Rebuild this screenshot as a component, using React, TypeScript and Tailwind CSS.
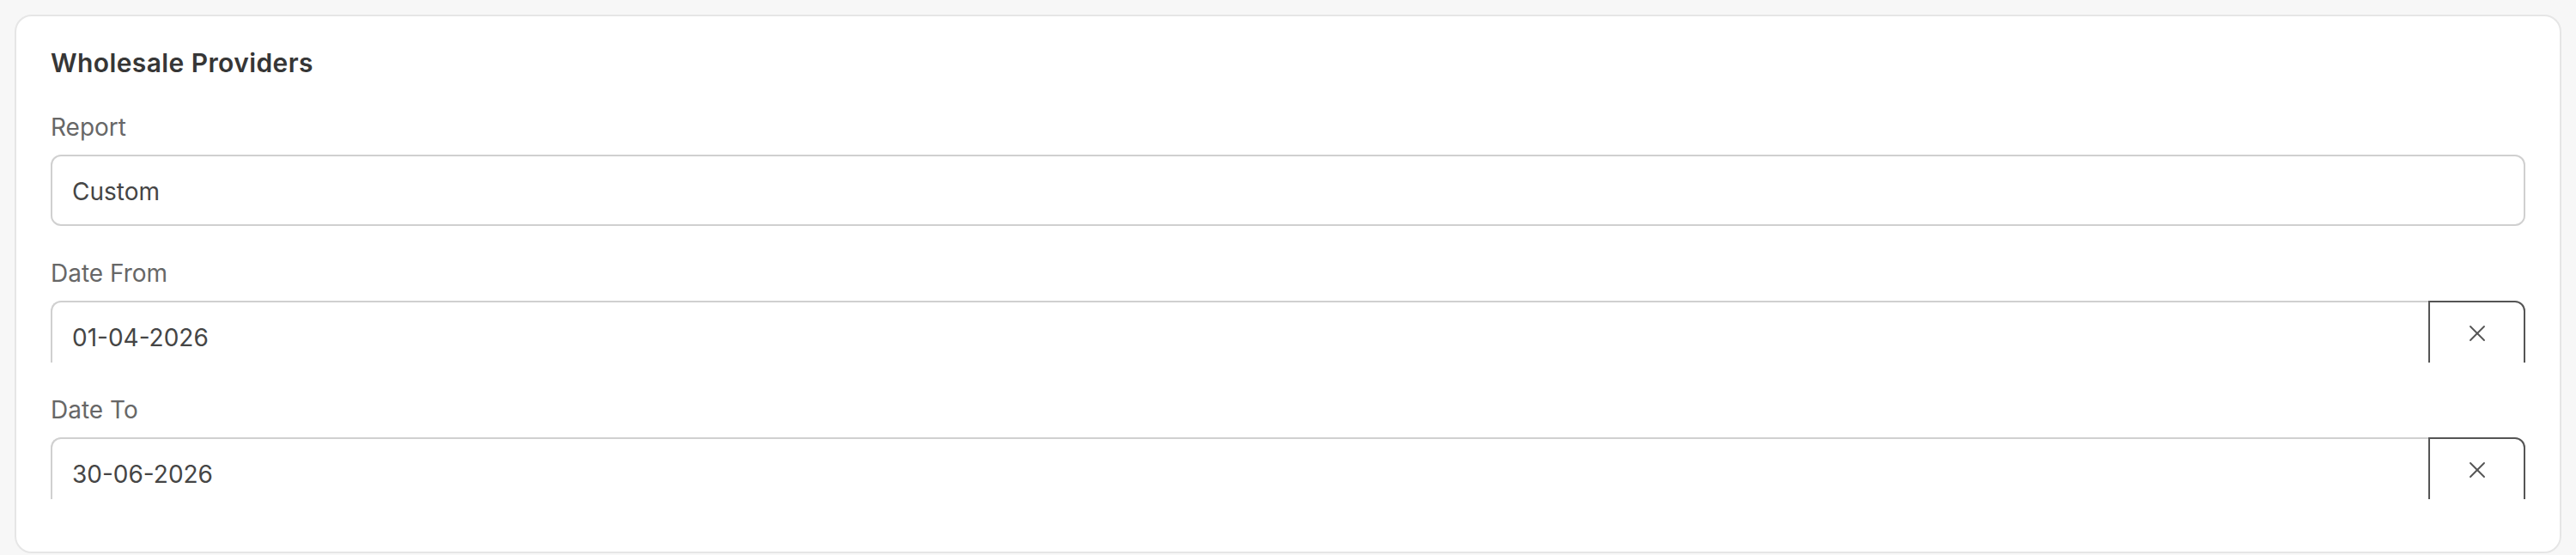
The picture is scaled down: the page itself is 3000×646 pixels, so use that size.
import * as React from 'react';
import { X } from 'lucide-react';

interface DateFieldProps {
  label: string;
  value: string;
}

const DateField = ({ label, value }: DateFieldProps) => (
  <div>
    <label className="block text-[28px] leading-[36px] text-[#676767] mt-[37px]">{label}</label>
    <div className="mt-[14px] h-[72px] overflow-hidden">
      <div className="flex h-[83px]">
        <div className="flex-1 flex items-center pl-[23px] pt-[3px] border-2 border-r-0 border-[#d0d0d0] rounded-l-[12px] text-[28px] text-[#454545]">
          {value}
        </div>
        <button className="w-[113px] flex items-center justify-center border-2 border-[#555555] rounded-r-[12px] text-[#555555] pb-[8px]">
          <X className="w-[32px] h-[32px]" strokeWidth={1.4} />
        </button>
      </div>
    </div>
  </div>
);

export default function App() {
  return (
    <div className="min-h-[646px] bg-[#f7f7f7] pt-[17px] px-[17px] font-['Inter',sans-serif]">
      <div className="bg-white border-2 border-[#e6e6e6] rounded-[20px] px-[40px] pt-[36px] pb-[61px]">
        <h3 className="text-[30px] leading-[36px] font-semibold text-[#363636] tracking-[0.4px]">Wholesale Providers</h3>

        <label className="block text-[28px] leading-[36px] text-[#676767] mt-[39px]">Report</label>
        <div className="mt-[14px] h-[83px] flex items-center pl-[23px] pt-[3px] border-2 border-[#d0d0d0] rounded-[12px] text-[28px] text-[#454545]">
          Custom
        </div>

        <DateField label="Date From" value="01-04-2026" />
        <DateField label="Date To" value="30-06-2026" />
      </div>
    </div>
  );
}
